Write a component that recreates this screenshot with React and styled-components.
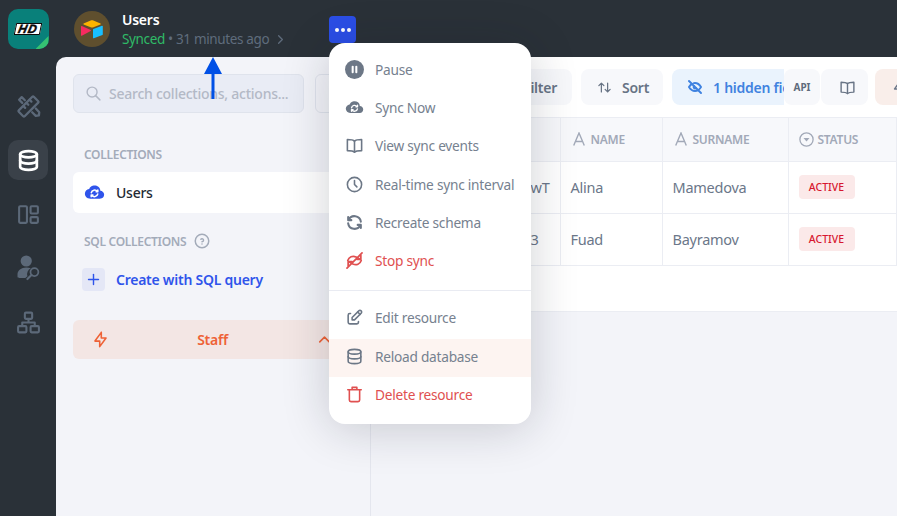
import React from "react";
import styled, { createGlobalStyle } from "styled-components";
import {
  TbBolt,
  TbChevronRight,
  TbChevronUp,
  TbClock,
  TbDatabase,
  TbEdit,
  TbEyeOff,
  TbHelpCircle,
  TbPlus,
  TbRefresh,
  TbSearch,
  TbArrowsSort,
} from "react-icons/tb";

const GlobalStyle = createGlobalStyle`
  html, body {
    margin: 0;
    height: 100%;
    overflow: hidden;
  }
  body {
    font-family: "Noto Sans", "Open Sans", sans-serif;
    letter-spacing: -0.25px;
  }
  #root {
    height: 100%;
  }
`;

const Page = styled.div`
  display: flex;
  width: 897px;
  height: 516px;
  overflow: hidden;
  position: relative;
  background: #2a3138;
`;

const Rail = styled.nav`
  width: 56px;
  flex-shrink: 0;
  display: flex;
  flex-direction: column;
  align-items: center;
  padding-top: 9px;
  box-sizing: border-box;
`;

const Logo = styled.div`
  position: relative;
  width: 41px;
  height: 40px;
  margin-bottom: 37px;
  border-radius: 10px;
  background: #09807a;
  overflow: hidden;
  display: flex;
  align-items: center;
  justify-content: center;

  &::after {
    content: "";
    position: absolute;
    right: 0;
    bottom: 0;
    width: 13px;
    height: 13px;
    background: #35c272;
    clip-path: polygon(100% 0, 100% 100%, 0 100%);
  }
`;

const LogoPlate = styled.div`
  width: 26px;
  height: 12px;
  box-sizing: border-box;
  background: #fff;
  border: 1px solid #0a0a0a;
  transform: skewX(-12deg);
  display: flex;
  align-items: center;
  justify-content: center;
  margin-top: -1px;
`;

const LogoText = styled.span`
  font: italic 900 12px/10px "Liberation Sans", sans-serif;
  letter-spacing: 1px;
  color: #0a0a0a;
  -webkit-text-stroke: 0.5px #0a0a0a;
`;

const NavItem = styled.div`
  width: 40px;
  height: 40px;
  margin-bottom: 14px;
  border-radius: 10px;
  display: flex;
  align-items: center;
  justify-content: center;
  background: ${(p) => (p.$active ? "#3a4149" : "transparent")};
  color: ${(p) => (p.$active ? "#ffffff" : "#5c6979")};
  font-size: 25px;
`;

const Main = styled.div`
  flex: 1;
  min-width: 0;
  display: flex;
  flex-direction: column;
`;

const TopBar = styled.header`
  height: 57px;
  flex-shrink: 0;
  display: flex;
  align-items: flex-start;
  box-sizing: border-box;
  padding: 11px 0 0 18px;
`;

const Avatar = styled.div`
  width: 36px;
  height: 36px;
  border-radius: 50%;
  background: #5f4f2e;
  display: flex;
  align-items: center;
  justify-content: center;
`;

const SourceInfo = styled.div`
  margin-left: 12px;
  width: 207px;
  display: flex;
  flex-direction: column;
`;

const SourceName = styled.div`
  color: #fff;
  font-size: 14px;
  font-weight: 600;
  line-height: 18px;
`;

const SourceStatus = styled.div`
  display: flex;
  align-items: center;
  font-size: 13.5px;
  letter-spacing: -0.35px;
  line-height: 20px;
  color: #5f6c7c;
`;

const Synced = styled.span`
  color: #2fbb67;
`;

const Dots = styled.div`
  width: 27px;
  height: 27px;
  margin-top: 5px;
  border-radius: 4px;
  background: #2b4ee6;
  display: flex;
  align-items: center;
  justify-content: center;
  gap: 2px;
`;

const Dot = styled.i`
  width: 4px;
  height: 4px;
  border-radius: 50%;
  background: #fff;
`;

const Body = styled.div`
  flex: 1;
  min-height: 0;
  display: flex;
  background: #f3f4f9;
  border-top-left-radius: 10px;
  overflow: hidden;
`;

const Side = styled.aside`
  width: 315px;
  flex-shrink: 0;
  box-sizing: border-box;
  padding: 17px 16px 0 17px;
  border-right: 1px solid #e4e6ee;
  display: flex;
  flex-direction: column;
`;

const SearchRow = styled.div`
  display: flex;
  gap: 11px;
`;

const SearchBox = styled.div`
  width: 231px;
  height: 39px;
  flex-shrink: 0;
  box-sizing: border-box;
  border: 1px solid #dfe3ec;
  border-radius: 6px;
  background: #e9ecf5;
  display: flex;
  align-items: center;
  gap: 7px;
  padding-left: 11px;
  color: #b3b9c6;
  font-size: 14px;
  font-weight: 500;
  white-space: nowrap;
`;

const SearchAdd = styled.div`
  flex: 1;
  height: 39px;
  box-sizing: border-box;
  border: 1px solid #dfe3ec;
  border-radius: 6px;
`;

const SectionLabel = styled.div`
  display: flex;
  align-items: center;
  gap: 7px;
  height: 16px;
  margin-top: ${(p) => p.$top}px;
  padding-left: 11px;
  color: #a3abb9;
  font-size: 12px;
  font-weight: 600;
  letter-spacing: -0.3px;
  text-transform: uppercase;
`;

const CollectionRow = styled.div`
  height: 41px;
  display: flex;
  align-items: center;
  gap: 11px;
  padding-left: 11px;
  margin-top: 10px;
  border-radius: 6px;
  background: #fff;
  color: #242a33;
  font-size: 14px;
  font-weight: 500;
`;

const CreateRow = styled.div`
  display: flex;
  align-items: center;
  gap: 11px;
  margin: 19px 0 0 9px;
  color: #2f54eb;
  font-size: 14px;
  font-weight: 600;
`;

const PlusBox = styled.div`
  width: 23px;
  height: 23px;
  border-radius: 4px;
  background: #e4e7f6;
  display: flex;
  align-items: center;
  justify-content: center;
  font-size: 17px;
`;

const StaffRow = styled.div`
  height: 39px;
  margin-top: 29px;
  border-radius: 6px;
  background: #f3e6e4;
  color: #ee6236;
  display: flex;
  align-items: center;
  justify-content: space-between;
  padding: 0 20px 0 18px;
  font-size: 14px;
  font-weight: 600;
  svg {
    font-size: 19px;
  }
`;

const Content = styled.section`
  flex: 1;
  min-width: 0;
  display: flex;
  flex-direction: column;
`;

const WhiteArea = styled.div`
  background: #fff;
  height: 254px;
  border-bottom: 1px solid #ebedf3;
`;

const Toolbar = styled.div`
  height: 61px;
  box-sizing: border-box;
  display: flex;
  align-items: center;
  border-bottom: 1px solid #ebedf3;
`;

const ToolsLeft = styled.div`
  width: 413px;
  flex-shrink: 0;
  display: flex;
  gap: 9px;
  padding-left: 111px;
  box-sizing: border-box;
  overflow: hidden;
`;

const ToolsRight = styled.div`
  display: flex;
  flex: 1;
  gap: 1px;
`;

const ToolButton = styled.div`
  width: ${(p) => p.$w}px;
  height: 36px;
  flex-shrink: 0;
  box-sizing: border-box;
  display: flex;
  align-items: center;
  justify-content: ${(p) => p.$justify || "flex-start"};
  gap: 10px;
  padding: 0 ${(p) => p.$right || 0}px 0 ${(p) => p.$left || 0}px;
  margin-left: ${(p) => p.$ml || 0}px;
  border-radius: 8px;
  background: ${(p) => p.$bg || "#f7f8fb"};
  color: ${(p) => p.$color || "#687485"};
  font-size: 14px;
  font-weight: 600;
  white-space: nowrap;
  svg {
    font-size: ${(p) => p.$icon || 17}px;
  }
`;

const ApiLabel = styled.span`
  font-size: 10px;
  font-weight: 700;
  letter-spacing: 0;
  color: #5f6b7b;
`;

const HiddenIcon = styled(TbEyeOff)`
  stroke-width: 3;
`;

const Table = styled.table`
  border-collapse: collapse;
  table-layout: fixed;
  width: 526px;
`;

const Th = styled.th`
  height: 43px;
  box-sizing: border-box;
  padding: 0 0 0 ${(p) => p.$pad || 12}px;
  background: #f7f8fb;
  border-right: 1px solid #ebedf3;
  border-bottom: 1px solid #ebedf3;
  text-align: left;
  color: #a2a9b8;
  font-size: 12px;
  font-weight: 600;
  text-transform: uppercase;
`;

const ThInner = styled.div`
  display: flex;
  align-items: center;
  gap: ${(p) => p.$gap || 6}px;
`;

const Td = styled.td`
  height: 52px;
  box-sizing: border-box;
  padding: 0 0 0 10px;
  border-right: 1px solid #ebedf3;
  border-bottom: 1px solid #ebedf3;
  color: #6b7789;
  font-size: 14.5px;
`;

const IdCell = styled(Td)`
  text-align: right;
  padding-right: ${(p) => p.$end}px;
`;

const Badge = styled.span`
  display: inline-flex;
  align-items: center;
  justify-content: center;
  width: 56px;
  height: 24px;
  border-radius: 4px;
  background: #fbe9e9;
  color: #d7172f;
  font-size: 10.5px;
  font-weight: 500;
  letter-spacing: 0;
`;

const Menu = styled.div`
  position: absolute;
  left: 329px;
  top: 43px;
  width: 202px;
  height: 381px;
  box-sizing: border-box;
  padding-top: 7.4px;
  border-radius: 16px;
  background: #fff;
  box-shadow: 0 4px 48px rgba(20, 25, 40, 0.2);
`;

const MenuItem = styled.div`
  height: 38.2px;
  box-sizing: border-box;
  display: flex;
  align-items: center;
  gap: 11px;
  padding: 0 0 ${(p) => (p.$hover ? 4 : 0)}px 16px;
  margin: ${(p) => (p.$hover ? "2.6px 0 -2.1px" : 0)};
  background: ${(p) => (p.$hover ? "#fdf4f1" : "transparent")};
  color: ${(p) => (p.$danger ? "#e05050" : "#76818f")};
  font-size: 13.7px;
  white-space: nowrap;
  svg {
    width: 19px;
    height: 19px;
    flex-shrink: 0;
  }
`;

const MenuIcon = styled.span`
  display: flex;
  width: 19px;
  color: ${(p) => (p.$danger ? "#e05050" : "#6c7786")};
`;

const MenuDivider = styled.div`
  height: 1px;
  background: #e9ebf2;
  margin: 10.6px 0 7.4px;
`;

const RefreshIcon = styled(TbRefresh)`
  stroke-width: 2.6;
`;

const DbIcon = styled(TbDatabase)`
  stroke-width: ${(p) => p.$weight};
`;

const ArrowMark = styled.svg`
  position: absolute;
  left: 204px;
  top: 57px;
`;

const lineProps = {
  fill: "none",
  stroke: "currentColor",
  strokeWidth: 2,
  strokeLinecap: "round",
  strokeLinejoin: "round",
};

const CloudSync = ({ size = 19, color = "currentColor" }) => (
  <svg width={size} height={size} viewBox="0 0 24 24">
    <path
      fill={color}
      d="M10.04 4.305c2.195-.667 4.615-.224 6.36 1.176 1.386 1.108 2.188 2.686 2.252 4.34l.003.212.091.003c2.3.107 4.143 1.961 4.25 4.27l.004.211c0 2.407-1.885 4.372-4.255 4.482l-.21.005H6.657l-.222-.008c-2.94-.11-5.317-2.399-5.43-5.263l-.005-.216c0-2.747 2.08-5.01 4.784-5.417l.114-.016.07-.181c.663-1.62 2.056-2.906 3.829-3.518l.244-.08z"
    />
    <path
      fill="none"
      stroke="#fff"
      strokeWidth="1.7"
      strokeLinecap="round"
      strokeLinejoin="round"
      d="M8.300 12.300a3.900 3.900 0 0 1 6.900-1.500m.6-1.600v2h-2M15.700 13.700a3.900 3.900 0 0 1-6.900 1.500m-.6 1.600v-2h2"
    />
  </svg>
);

const PauseCircle = () => (
  <svg viewBox="0 0 24 24">
    <circle cx="12" cy="12" r="12" fill="currentColor" />
    <rect x="8.400" y="7.400" width="2.600" height="9.200" rx="1.200" fill="#fff" />
    <rect x="13" y="7.400" width="2.600" height="9.200" rx="1.200" fill="#fff" />
  </svg>
);

const OpenBook = ({ size = 19 }) => (
  <svg width={size} height={size} viewBox="0 0 24 24" {...lineProps}>
    <path d="M12 6.500C10.500 5 8 4.500 3 4.500v14c5 0 7.500.5 9 2 1.500-1.500 4-2 9-2v-14c-5 0-7.500.5-9 2z" />
    <path d="M12 6.500v14" />
  </svg>
);

const StopSync = () => (
  <svg viewBox="0 0 24 24" {...lineProps} strokeWidth="2.200">
    <path d="M3.500 12C5 7.500 9.500 5.500 14 7.500l5 3" />
    <path d="M20.500 12c-1.500 4.500-6 6.500-10.500 4.500l-5-3" />
    <path d="M20 5.500v5h-5M4 18.500v-5h5" />
    <path d="M2.500 21.500 21.500 2.500" />
  </svg>
);

const PlainTrash = () => (
  <svg viewBox="0 0 24 24" {...lineProps}>
    <path d="M3.500 6h17M9 6V3h6v3" />
    <path d="M5.500 6v13a2 2 0 0 0 2 2h9a2 2 0 0 0 2-2V6" />
  </svg>
);

const Wrench = () => (
  <svg width="25" height="25" viewBox="0 0 24 24" {...lineProps} strokeWidth="2.200">
    <rect x="1.800" y="8" width="20.400" height="8" rx="1" transform="rotate(-45 12 12)" />
    <path d="M10 8.500l1.800 1.800M13 5.500l1.800 1.800M7 11.500l1.800 1.800" />
    <path d="M8.500 6 5.500 3 3 5.500l3 3M15.500 17.500l3.500 3.500 3-.5.300-3-3.300-3.500" />
  </svg>
);

const DashPanels = () => (
  <svg width="25" height="25" viewBox="0 0 24 24" {...lineProps} strokeLinecap="butt">
    <rect x="3" y="4" width="7.500" height="16" rx="1" />
    <rect x="14" y="4" width="7" height="7" rx="1" />
    <rect x="14" y="14.500" width="7" height="5.500" rx="1" />
  </svg>
);

const UserSearch = () => (
  <svg width="28" height="28" viewBox="0 0 24 24" fill="currentColor">
    <circle cx="10.500" cy="6" r="4.800" />
    <path d="M3 19.500v-2C3 14 6.200 11.500 10.500 11.500c1.500 0 2.800.3 4 .8a5.500 5.500 0 0 0-3 6.700l-1.800 1.500H4.500c-.8 0-1.500-.2-1.500-1z" />
    <circle cx="17.500" cy="15.500" r="3.400" fill="none" stroke="currentColor" strokeWidth="1.500" />
    <path d="M15 18l-3.500 3.500" fill="none" stroke="currentColor" strokeWidth="1.800" strokeLinecap="round" />
  </svg>
);

const SiteTree = () => (
  <svg width="25" height="25" viewBox="0 0 24 24" {...lineProps} strokeLinecap="butt">
    <rect x="8.500" y="2.500" width="7" height="6" rx="1" />
    <rect x="2" y="15.500" width="8" height="6" rx="1" />
    <rect x="14" y="15.500" width="8" height="6" rx="1" />
    <path d="M12 8.500v3.500M6 15.500V12h12v3.500" />
  </svg>
);

const LetterMark = () => (
  <svg width="12" height="14" viewBox="0 0 12 14" fill="none" stroke="currentColor" strokeWidth="1.400">
    <path d="M.7 13.500 6 1l5.300 12.500M2.600 9.500h6.800" />
  </svg>
);

const SelectMark = () => (
  <svg width="15" height="15" viewBox="0 0 15 15">
    <circle cx="7.500" cy="7.500" r="6.600" fill="none" stroke="currentColor" strokeWidth="1.300" />
    <path d="M4.500 6h6l-3 3.500z" fill="currentColor" />
  </svg>
);

const SourceLogo = () => (
  <svg width="22" height="19" viewBox="0 0 22 19">
    <path d="M10.200.3 2.600 3.400c-.4.200-.4.800 0 1l7.700 3c.5.200 1 .2 1.500 0l7.700-3c.4-.2.400-.8 0-1L11.800.3c-.5-.2-1.100-.2-1.600 0z" fill="#fcb400" />
    <path d="M12 9.500v8.300c0 .4.400.7.800.5l8.600-3.300c.2-.1.400-.3.400-.5V6.200c0-.4-.4-.7-.8-.5l-8.600 3.300c-.2.100-.4.300-.4.500z" fill="#18bfff" />
    <path d="M0 6.600v8.600c0 .4.500.7.800.5L9.700 11c.4-.2.400-.7 0-.9L.8 6.100c-.3-.2-.8 0-.8.500z" fill="#f82b60" />
  </svg>
);

const rows = [
  { id: "wT", end: 10, name: "Alina", surname: "Mamedova" },
  { id: "3", end: 21, name: "Fuad", surname: "Bayramov" },
];

const App = () => {
  return (
    <Page>
      <GlobalStyle />
      <Rail>
        <Logo>
          <LogoPlate>
            <LogoText>HD</LogoText>
          </LogoPlate>
        </Logo>
        <NavItem><Wrench /></NavItem>
        <NavItem $active><DbIcon $weight={2.6} /></NavItem>
        <NavItem><DashPanels /></NavItem>
        <NavItem><UserSearch /></NavItem>
        <NavItem><SiteTree /></NavItem>
      </Rail>
      <Main>
        <TopBar>
          <Avatar><SourceLogo /></Avatar>
          <SourceInfo>
            <SourceName>Users</SourceName>
            <SourceStatus>
              <Synced>Synced</Synced>&nbsp;• 31 minutes ago&nbsp;<TbChevronRight size={15} />
            </SourceStatus>
          </SourceInfo>
          <Dots><Dot /><Dot /><Dot /></Dots>
        </TopBar>
        <Body>
          <Side>
            <SearchRow>
              <SearchBox>
                <TbSearch size={17} />
                Search collections, actions...
              </SearchBox>
              <SearchAdd />
            </SearchRow>
            <SectionLabel $top={33}>Collections</SectionLabel>
            <CollectionRow>
              <CloudSync size={21} color="#2f54eb" />
              Users
            </CollectionRow>
            <SectionLabel $top={20}>
              SQL Collections <TbHelpCircle size={18} />
            </SectionLabel>
            <CreateRow>
              <PlusBox><TbPlus /></PlusBox>
              Create with SQL query
            </CreateRow>
            <StaffRow>
              <TbBolt />
              Staff
              <TbChevronUp />
            </StaffRow>
          </Side>
          <Content>
            <WhiteArea>
              <Toolbar>
                <ToolsLeft>
                  <ToolButton $w={90} $justify="flex-end" $right={15}>Filter</ToolButton>
                  <ToolButton $w={82} $left={16} $icon={15}><TbArrowsSort />Sort</ToolButton>
                  <ToolButton $w={150} $left={15} $bg="#eaf3fd" $color="#3f82e0" $icon={16}><HiddenIcon />1 hidden field</ToolButton>
                </ToolsLeft>
                <ToolsRight>
                  <ToolButton $w={36} $justify="center"><ApiLabel>API</ApiLabel></ToolButton>
                  <ToolButton $w={47} $justify="center" $left={5}><OpenBook size={17} /></ToolButton>
                  <ToolButton $w={40} $ml={6} $left={16} $bg="#f9eeea" $color="#6b7789"><TbBolt /></ToolButton>
                </ToolsRight>
              </Toolbar>
              <Table>
                <colgroup>
                  <col style={{ width: 189 }} />
                  <col style={{ width: 102 }} />
                  <col style={{ width: 126 }} />
                  <col />
                </colgroup>
                <thead>
                  <tr>
                    <Th>ID</Th>
                    <Th><ThInner><LetterMark />Name</ThInner></Th>
                    <Th><ThInner><LetterMark />Surname</ThInner></Th>
                    <Th $pad={10}><ThInner $gap={4}><SelectMark />Status</ThInner></Th>
                  </tr>
                </thead>
                <tbody>
                  {rows.map((row) => (
                    <tr key={row.name}>
                      <IdCell $end={row.end}>{row.id}</IdCell>
                      <Td>{row.name}</Td>
                      <Td>{row.surname}</Td>
                      <Td><Badge>ACTIVE</Badge></Td>
                    </tr>
                  ))}
                </tbody>
              </Table>
            </WhiteArea>
          </Content>
        </Body>
      </Main>
      <ArrowMark width="18" height="42" viewBox="0 0 18 42">
        <path d="M9 0 18 17H10.500V42H7.500V17H0z" fill="#0050e6" />
      </ArrowMark>
      <Menu>
        <MenuItem><MenuIcon><PauseCircle /></MenuIcon>Pause</MenuItem>
        <MenuItem><MenuIcon><CloudSync /></MenuIcon>Sync Now</MenuItem>
        <MenuItem><MenuIcon><OpenBook /></MenuIcon>View sync events</MenuItem>
        <MenuItem><MenuIcon><TbClock /></MenuIcon>Real-time sync interval</MenuItem>
        <MenuItem><MenuIcon><RefreshIcon /></MenuIcon>Recreate schema</MenuItem>
        <MenuItem $danger><MenuIcon $danger><StopSync /></MenuIcon>Stop sync</MenuItem>
        <MenuDivider />
        <MenuItem><MenuIcon><TbEdit /></MenuIcon>Edit resource</MenuItem>
        <MenuItem $hover><MenuIcon><TbDatabase /></MenuIcon>Reload database</MenuItem>
        <MenuItem $danger><MenuIcon $danger><PlainTrash /></MenuIcon>Delete resource</MenuItem>
      </Menu>
    </Page>
  );
};

export default App;
